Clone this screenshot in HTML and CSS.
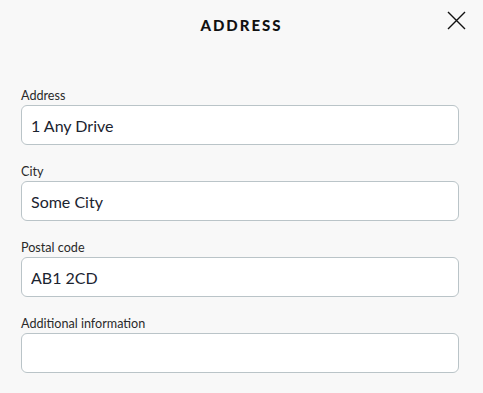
FILE: index.html
```html
<!DOCTYPE html>
<html lang="en">
<head>
<meta charset="utf-8">
<link rel="stylesheet" href="styles.css">
</head>
<body>
<div class="dialog">
  <header class="header">
    <h1 class="title">ADDRESS</h1>
    <button class="close" aria-label="Close">
      <svg width="19" height="19" viewBox="0 0 19 19"><path d="M1 1L18 18M18 1L1 18" stroke="#111" stroke-width="1.4" fill="none"/></svg>
    </button>
  </header>
  <form class="form">
    <label class="field">
      <span class="label">Address</span>
      <input class="input" type="text" value="1 Any Drive">
    </label>
    <label class="field">
      <span class="label">City</span>
      <input class="input" type="text" value="Some City">
    </label>
    <label class="field">
      <span class="label">Postal code</span>
      <input class="input" type="text" value="AB1 2CD">
    </label>
    <label class="field">
      <span class="label">Additional information</span>
      <input class="input" type="text" value="">
    </label>
  </form>
</div>
</body>
</html>
```

FILE: styles.css
```css
* { box-sizing: border-box; }
html, body { margin: 0; padding: 0; }
body {
  background: #f8f8f8;
  font-family: "Lato", "Open Sans", sans-serif;
  color: #222;
  width: 483px;
  height: 393px;
  overflow: hidden;
}
.header {
  position: relative;
  height: 49px;
  display: flex;
  align-items: center;
  justify-content: center;
}
.title {
  margin: 0;
  font-size: 15px;
  font-weight: 900;
  letter-spacing: 2px;
  color: #111;
  padding-top: 1px;
}
.close {
  position: absolute;
  right: 17px;
  top: 11px;
  border: 0;
  background: none;
  padding: 0;
  width: 19px;
  height: 19px;
  cursor: pointer;
}
.close svg { display: block; }
.form {
  display: flex;
  flex-direction: column;
  gap: 20px;
  padding: 40px 24px 0 21px;
}
.field {
  display: flex;
  flex-direction: column;
  gap: 2px;
}
.label {
  font-size: 12.6px;
  line-height: 14px;
  color: #2a2a2a;
}
.input {
  width: 438px;
  height: 40px;
  border: 1px solid #bac4c8;
  border-radius: 6px;
  background: #fff;
  padding: 0 9px;
  font-family: inherit;
  font-size: 16px;
  color: #1b2430;
  outline: none;
}
```
